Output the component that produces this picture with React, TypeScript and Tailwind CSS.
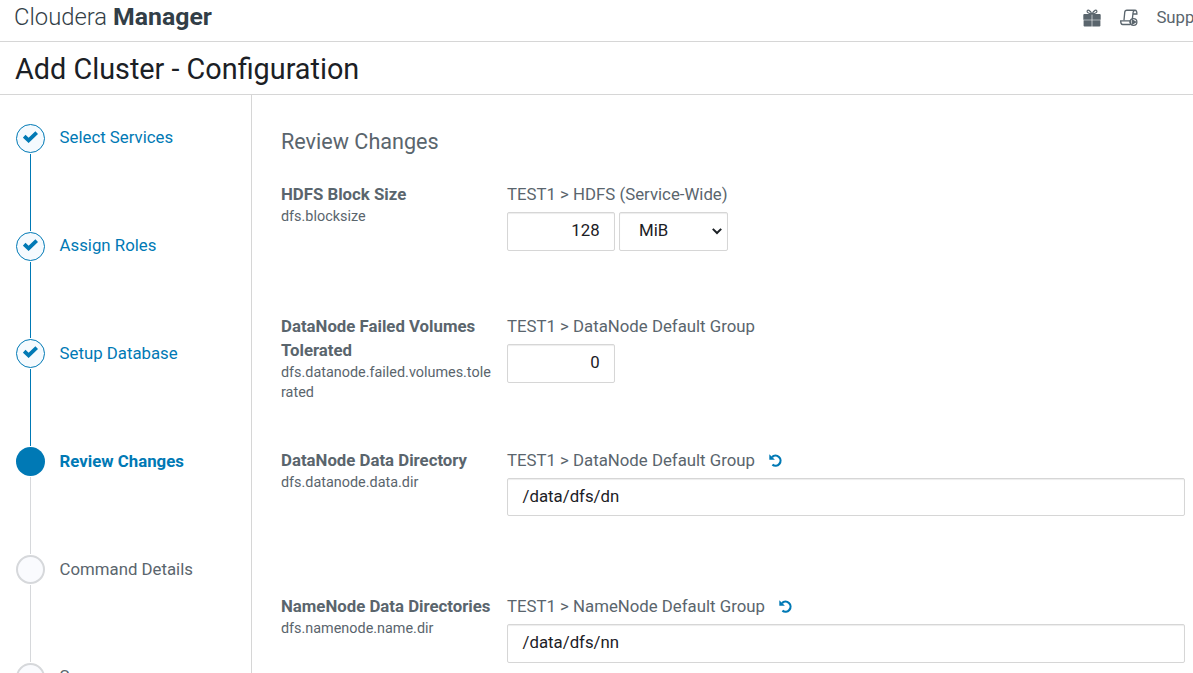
import React from "react";

type StepState = "done" | "current" | "todo";

const steps: { label: string; state: StepState }[] = [
  { label: "Select Services", state: "done" },
  { label: "Assign Roles", state: "done" },
  { label: "Setup Database", state: "done" },
  { label: "Review Changes", state: "current" },
  { label: "Command Details", state: "todo" },
  { label: "Summary", state: "todo" },
];

const circleStyle: Record<StepState, string> = {
  done: "border border-[#0079b5] bg-[#f5fafe] text-[#0079b5]",
  current: "bg-[#0079b5]",
  todo: "border-2 border-[#d6d8db] bg-[#fafbfe]",
};

const labelStyle: Record<StepState, string> = {
  done: "text-[#0079b5]",
  current: "font-bold text-[#0079b5]",
  todo: "text-[#5a656d]",
};

function CheckMark() {
  return (
    <svg width="15" height="12" viewBox="0 0 15 12" className="mb-[3px] shrink-0" fill="none">
      <path d="M1.2 5.2 5.6 9.4 13.7 1.6" stroke="#0079b5" strokeWidth="3.8" />
    </svg>
  );
}

function Step({ label, state }: { label: string; state: StepState }) {
  return (
    <li className="flex h-[107.8px] shrink-0 gap-[14.6px]">
      <div className="flex w-[29px] flex-col items-center">
        <span className={`flex h-[29px] w-[29px] shrink-0 items-center justify-center rounded-full ${circleStyle[state]}`}>
          {state === "done" && <CheckMark />}
        </span>
        <span className={`my-px w-px flex-1 ${state === "done" ? "bg-[#0079b5]" : "bg-[#d6d8db]"}`} />
      </div>
      <span className={`mt-[1.6px] h-6 ${labelStyle[state]}`}>{label}</span>
    </li>
  );
}

function Undo() {
  return (
    <svg width="14" height="14" viewBox="0 0 14 14" className="ml-[14px]" fill="none">
      <path d="M3 4.1A5 5 0 1 1 3.4 11.6" stroke="#0079b5" strokeWidth="2.2" />
      <path d="M.3 1.2V6.8H5.9Z" fill="#0079b5" />
    </svg>
  );
}

const box = "rounded-[2px] border border-[#d6d6d6] bg-white text-[#1b2025] shadow-[inset_0_1px_1px_rgba(0,0,0,0.075)]";

function Setting(props: {
  name: string;
  prop: string;
  scope: string;
  undo?: boolean;
  height: string;
  children: React.ReactNode;
}) {
  return (
    <div className={`flex gap-4 ${props.height}`}>
      <div className="w-[211px] shrink-0">
        <div className="mb-px leading-6 font-bold">{props.name}</div>
        <div className="text-[14.4px] leading-5 break-all">{props.prop}</div>
      </div>
      <div className="-ml-px flex-1">
        <div className="flex h-[30px] items-start leading-6">
          <span className="flex items-center whitespace-nowrap">
            {props.scope}
            {props.undo && <Undo />}
          </span>
        </div>
        <div className="flex gap-1">{props.children}</div>
      </div>
    </div>
  );
}

function GiftIcon() {
  return (
    <svg width="18" height="18" viewBox="0 0 18 18" className="shrink-0" fill="none">
      <path d="M8.8 5C7.5 1.2 4.1 0 4.1 2.5 4.1 4.2 6.5 4.6 8.8 5ZM9.2 5C10.5 1.2 13.9 0 13.9 2.5 13.9 4.2 11.5 4.6 9.2 5Z" stroke="#5a656d" strokeWidth="1.2" />
      <path d="M1 5H8.7V10.7H.3V5.7ZM9.3 5H17L17.7 5.7V10.7H9.3ZM.6 11.3H8.7V17.5H1.4L.6 17ZM9.3 11.3H17.4V17L16.6 17.5H9.3Z" fill="#5a656d" />
    </svg>
  );
}

function ScrollIcon() {
  return (
    <svg width="18" height="18" viewBox="0 0 19 18" className="shrink-0" fill="none" stroke="#5a656d" strokeWidth="1.4">
      <path d="M4.2 11.5 5 3Q5.2.8 7.2.8H15.8Q14 1 13.8 3.2L13 10.5M15.8.8Q18 .9 17.8 4.8H13.8" />
      <path d="M11 15.9H2.8Q.7 15.9.7 12H10.6Q10.6 15 12.2 16.4" />
      <circle cx="14.2" cy="13.2" r="3.6" />
      <path d="M13 11.2 16.4 13.3 13 15.4Z" fill="#5a656d" />
    </svg>
  );
}

export default function App() {
  return (
    <div className="flex h-[673px] w-[1193px] flex-col overflow-hidden bg-white font-[Roboto,sans-serif] text-[16.8px] leading-6 text-[#5a656d]">
      <header className="flex h-[42px] shrink-0 items-center justify-between border-b border-[#d6d6d6] pb-[6px] pl-[14px]">
        <div className="mb-[2px] flex items-baseline gap-[6px] text-[#323e47]">
          <span className="text-[23.8px] font-light">Cloudera</span>
          <span className="text-[24.8px] font-bold">Manager</span>
        </div>
        <div className="flex w-[110px] shrink-0 items-center overflow-hidden whitespace-nowrap">
          <GiftIcon />
          <span className="ml-[19px] shrink-0"><ScrollIcon /></span>
          <span className="mb-[2px] ml-[18.4px]">Support</span>
        </div>
      </header>
      <div className="flex h-[53px] shrink-0 items-center border-b border-[#d6d6d6] pt-px pl-[15px]">
        <h1 className="text-[28.8px] leading-8 text-[#1b2025]">Add Cluster - Configuration</h1>
      </div>
      <div className="flex min-h-0 flex-1">
        <ol className="flex w-[252px] shrink-0 flex-col overflow-hidden border-r border-[#d6d6d6] pt-[28.85px] pl-4">
          {steps.map((s) => (
            <Step key={s.label} {...s} />
          ))}
        </ol>
        <main className="flex-1 overflow-hidden pt-8 pr-2 pl-[29px]">
          <h2 className="mb-[25px] text-[21.6px] leading-[30px]">Review Changes</h2>
          <Setting name="HDFS Block Size" prop="dfs.blocksize" scope="TEST1 > HDFS (Service-Wide)" height="h-[132px]">
            <div className={`h-[39px] w-[108px] pt-[5px] pr-[14.4px] text-right ${box}`}>128</div>
            <div className={`flex h-[39px] w-[109px] justify-between pt-[5px] pr-[5px] pl-[19px] ${box}`}>
              <span>MiB</span>
              <svg width="10" height="7" viewBox="0 0 10 7" fill="none" className="mt-[10px]">
                <path d="M.8.9 5 5 9.2.9" stroke="#1b2025" strokeWidth="2" />
              </svg>
            </div>
          </Setting>
          <Setting name="DataNode Failed Volumes Tolerated" prop="dfs.datanode.failed.volumes.tolerated" scope="TEST1 > DataNode Default Group" height="h-[134px]">
            <div className={`h-[39px] w-[108px] pt-[5px] pr-[14.4px] text-right ${box}`}>0</div>
          </Setting>
          <Setting name="DataNode Data Directory" prop="dfs.datanode.data.dir" scope="TEST1 > DataNode Default Group" undo height="h-[146px]">
            <div className={`h-[38px] flex-1 pt-[5px] pl-[14.6px] ${box}`}>/data/dfs/dn</div>
          </Setting>
          <Setting name="NameNode Data Directories" prop="dfs.namenode.name.dir" scope="TEST1 > NameNode Default Group" undo height="h-[146px]">
            <div className={`h-[39px] flex-1 pt-[5px] pl-[14.6px] ${box}`}>/data/dfs/nn</div>
          </Setting>
        </main>
      </div>
    </div>
  );
}
